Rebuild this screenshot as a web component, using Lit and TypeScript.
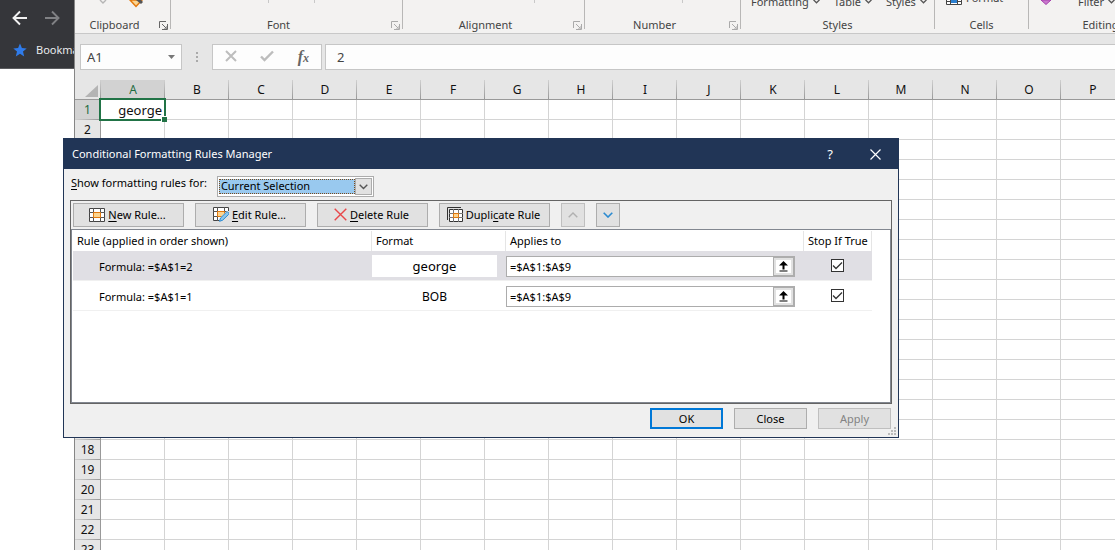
import { LitElement, html, css, svg, nothing } from "lit";
import { customElement, state } from "lit/decorators.js";

const COLUMNS = "ABCDEFGHIJKLMNOP".split("");
const ROWS = Array.from({ length: 23 }, (_, i) => i + 1);

interface Rule {
  formula: string;
  preview: string;
  large: boolean;
  range: string;
  stop: boolean;
}

const chevron = html`<svg class="chev" viewBox="0 0 7 5" width="7" height="5" aria-hidden="true">
  <path d="M0.5 0.8 3.5 3.8 6.5 0.8" fill="none" stroke="#555" stroke-width="1.3" />
</svg>`;

const newIcon = html`<svg viewBox="0 0 16 14" width="16" height="14" aria-hidden="true">
  <path d="M.5 .5h15v13h-15z" fill="#fff" stroke="#444" />
  <path d="M0 4.5h16M0 9.5h16M4.5 0v14M11.5 0v14" stroke="#555" fill="none" />
  <path d="M4.5 4.5h7v5h-7z" fill="#fbd591" stroke="#e3780c" />
</svg>`;

const editIcon = html`<svg viewBox="0 0 16 15" width="16" height="15" aria-hidden="true">
  <path d="M.5 .5h15v13h-15z" fill="#fff" stroke="#444" />
  <path d="M0 4.5h16M0 9.5h16M4.5 0v14M11.5 0v14" stroke="#555" fill="none" />
  <path d="M4.5 4.5h7v5h-7z" fill="#fbd591" stroke="#e3780c" />
  <path d="M16 4v11H6l1-4 7-7z" fill="#e1e1e1" />
  <path d="M6.5 14.3l1-3.3 6-5.8q1.2-.6 2 .3t.2 1.8l-6 5.9z" fill="#8cc7ee" stroke="#2b8ad0" />
</svg>`;

const deleteIcon = html`<svg viewBox="0 0 13 13" width="13" height="13" aria-hidden="true">
  <path d="M.7 .7 12.3 12.3M12.3 .7.7 12.3" stroke="#e8474a" stroke-width="1.4" fill="none" />
</svg>`;

const duplicateIcon = html`<svg viewBox="0 0 16 15" width="16" height="15" aria-hidden="true">
  <path d="M.5 13V.5H14" stroke="#333" fill="none" />
  <path d="M2.5 2.5h13v12h-13z" fill="#fff" stroke="#333" />
  <path d="M2 6.5h14M2 10.5h14M6.5 2v13M11.5 2v13" stroke="#777" fill="none" />
  <path d="M6.5 6.5h5v4h-5z" fill="#fbd591" stroke="#e3780c" />
</svg>`;

@customElement("app-browser")
class AppBrowser extends LitElement {
  static styles = css`
    :host { display: block; height: 68px; background: #35363a; border-bottom: 1px solid #5b5c5f; overflow: hidden; }
    .nav { display: flex; gap: 16px; padding: 10px 0 0 12px; }
    .icon { display: block; flex: none; }
    .nav button { border: 0; padding: 0; background: none; }
    .bookmarks { display: flex; align-items: center; gap: 9px; padding: 16px 0 0 13px; }
    .bookmarks a { color: #e8eaed; text-decoration: none; font-size: 11px; line-height: 16px; white-space: nowrap; }
  `;
  render() {
    return html`
      <nav class="nav">
        <button aria-label="Back"><svg class="icon" width="16" height="16" viewBox="0 0 16 16"><path d="M15 8H2M8 1.5 1.5 8 8 14.5" fill="none" stroke="#f1f1f1" stroke-width="1.9"/></svg></button>
        <button aria-label="Forward"><svg class="icon" width="16" height="16" viewBox="0 0 16 16"><path d="M1 8h13M8 1.5 14.5 8 8 14.5" fill="none" stroke="#808184" stroke-width="1.9"/></svg></button>
      </nav>
      <div class="bookmarks">
        <svg class="icon" width="14" height="14" viewBox="0 0 14 14"><path d="M7 .4 8.9 5 13.7 5.4 10 8.6 11.2 13.4 7 10.8 2.8 13.4 4 8.6.3 5.4 5.1 5z" fill="#2f7bea"/></svg>
        <a href="#bookmarks">Bookmarks</a>
      </div>`;
  }
}

@customElement("app-ribbon")
class AppRibbon extends LitElement {
  static styles = css`
    :host { display: flex; height: 33px; background: #f3f2f1; border-bottom: 1px solid #c8c8c8; overflow: hidden; color: #444; font-size: 11px; }
    .group { flex: none; box-sizing: border-box; height: 29px; display: flex; flex-direction: column; border-right: 1px solid #b8b7b6; }
    .clipboard { width: 96px; }
    .font { width: 232px; }
    .alignment { width: 182px; }
    .number { width: 156px; }
    .styles { width: 194px; }
    .cells { width: 94px; }
    .editing { width: 144px; }
    .tools { flex: none; height: 10px; display: flex; align-items: flex-end; box-sizing: border-box; }
    .tools.clip { padding-left: 23px; gap: 19px; align-items: flex-start; }
    .tools.fnt { padding-left: 97px; gap: 45px; align-items: flex-start; }
    .tools.aln { padding-left: 131px; align-items: flex-start; }
    .tools.num { padding-left: 97px; align-items: flex-start; }
    .tools.sty { padding-left: 10px; gap: 14px; }
    .tools.cel { padding-left: 11px; gap: 4px; align-items: flex-start; }
    .tools.edt { padding-left: 11px; gap: 26px; align-items: flex-start; }
    .tools button { border: 0; padding: 0; background: none; font: inherit; line-height: 16px; color: #444; display: flex; align-items: center; gap: 4px; }
    .tools.cel button { margin-top: -10px; }
    .tools.edt button { margin-top: -6px; }
    .chev { margin-bottom: 2px; }
    .tick { width: 1px; height: 3px; background: #c8c8c8; }
    .caption { display: flex; flex: none; align-items: center; gap: 5px; height: 14px; margin-top: 8px; padding-right: 2px; }
    .styles .caption, .cells .caption, .editing .caption { padding: 0; }
    .name { flex: 1; text-align: center; line-height: 14px; }
    .launch { border: 0; padding: 0; background: none; height: 9px; width: 9px; color: #aaa; }
    .launch.on { color: #666; }
    .launch svg { display: block; }
  `;
  launcher(on = false) {
    return html`<button class="launch ${on ? "on" : ""}" aria-label="More options"><svg width="9" height="9" viewBox="0 0 9 9"><path d="M.5 7V.5H7M3 3l4 4M8.5 3v5.5H3M8 5v3H5" fill="none" stroke="currentColor"/></svg></button>`;
  }
  group(cls: string, name: string, tools: unknown, launch: unknown = nothing) {
    return html`<section class="group ${cls}">${tools}<div class="caption"><span class="name">${name}</span>${launch}</div></section>`;
  }
  render() {
    return html`
      ${this.group("clipboard", "Clipboard", html`<div class="tools clip">
        <svg width="12" height="4" viewBox="0 0 12 4"><path d="M2 0 5 3 8 0" fill="none" stroke="#b5b5b5" stroke-width="1.4"/></svg>
        <svg width="16" height="8" viewBox="0 0 16 8"><path d="M1 0 7 6.5 13 0z" fill="#fbd591" stroke="#e3780c" stroke-width="1.5"/><path d="M7 0l5 4 2-2-2-2z" fill="#555"/></svg></div>`, this.launcher(true))}
      ${this.group("font", "Font", html`<div class="tools fnt"><i class="tick"></i><i class="tick"></i></div>`, this.launcher())}
      ${this.group("alignment", "Alignment", html`<div class="tools aln"><i class="tick"></i></div>`, this.launcher())}
      ${this.group("number", "Number", html`<div class="tools num"><i class="tick"></i></div>`, this.launcher())}
      ${this.group("styles", "Styles", html`<div class="tools sty"><button>Formatting${chevron}</button><button>Table${chevron}</button><button>Styles${chevron}</button></div>`)}
      ${this.group("cells", "Cells", html`<div class="tools cel"><svg width="16" height="5" viewBox="0 0 16 5"><path d="M.5 0v4.500h15V0M4.500 0v4M11.500 0v4M0 1.500h16" fill="#fff" stroke="#444"/><path d="M5 0h6v3H5z" fill="#2a7fd0"/></svg><button>Format</button></div>`)}
      ${this.group("editing", "Editing", html`<div class="tools edt"><svg width="12" height="5" viewBox="0 0 12 5"><path d="M1 0 6 4.500 11 0z" fill="#c879cc" stroke="#a63fae"/></svg><button>Filter${chevron}</button></div>`)}
    `;
  }
}

@customElement("app-formula-bar")
class AppFormulaBar extends LitElement {
  static styles = css`
    :host { display: flex; background: #e6e6e6; padding: 10px 0 10px 5px; color: #444; }
    .box { box-sizing: border-box; height: 26px; border: 1px solid #c6c6c6; background: #fdfdfd; display: flex; align-items: center; }
    .namebox { width: 102px; padding-right: 6px; }
    input { font: inherit; font-size: 13px; color: #444; border: 0; padding: 0; background: none; outline: none; min-width: 0; flex: 1; }
    .namebox input { padding-left: 6px; }
    .dots { width: 30px; display: grid; place-items: center; }
    .actions { width: 110px; justify-content: space-between; padding: 0 12px; margin-right: 3px; }
    .actions button { border: 0; padding: 0; background: none; height: 16px; }
    .fx { font-family: "Liberation Serif", serif; font-style: italic; font-weight: bold; font-size: 16px; line-height: 16px; color: #666; }
    .fx sub { font-size: 12px; line-height: 8px; vertical-align: baseline; }
    .formula { flex: 1; border-right: 0; padding-left: 11px; }
  `;
  render() {
    return html`
      <div class="box namebox"><input aria-label="Name box" value="A1" />
        <svg width="7" height="4" viewBox="0 0 7 4"><path d="M0 0h7L3.500 4z" fill="#777"/></svg></div>
      <div class="dots"><svg width="2" height="10" viewBox="0 0 2 10"><path d="M0 0h2v2H0zM0 4h2v2H0zM0 8h2v2H0z" fill="#aaa"/></svg></div>
      <div class="box actions">
        <button aria-label="Cancel"><svg width="12" height="12" viewBox="0 0 12 12"><path d="M1 1l10 10M11 1 1 11" stroke="#bdbdbd" stroke-width="2"/></svg></button>
        <button aria-label="Enter"><svg width="14" height="12" viewBox="0 0 14 12"><path d="M1 6.500 4.500 10 13 1.500" fill="none" stroke="#bdbdbd" stroke-width="2.400"/></svg></button>
        <button class="fx" aria-label="Insert function">f<sub>x</sub></button>
      </div>
      <div class="box formula"><input aria-label="Formula" value="2" /></div>`;
  }
}

@customElement("app-sheet")
class AppSheet extends LitElement {
  static styles = css`
    :host { display: block; overflow: hidden; background: #fff; }
    table { table-layout: fixed; border-collapse: separate; border-spacing: 0; width: 1050px; }
    .corner-col { width: 26px; }
    th, td { box-sizing: border-box; height: 20px; padding: 0; font-size: 12px; line-height: 18px; font-weight: normal; color: #111; }
    td { border-right: 1px solid #d4d4d4; border-bottom: 1px solid #d4d4d4; text-align: right; font-size: 13px; }
    thead th { border-bottom: 1px solid #999; background: linear-gradient(#d0d0d0, #999) right / 1px 100% no-repeat #e6e6e6; }
    tbody th { border-right: 1px solid #999; background: linear-gradient(90deg, #d0d0d0, #999) bottom / 100% 1px no-repeat #e6e6e6; }
    thead th.on { background-color: #d2d2d2; color: #1e6c41; border-bottom-color: #217346; }
    tbody th.on { background-color: #d2d2d2; color: #1e6c41; border-right-color: #217346; }
    .corner svg { display: block; margin: 3px 0 0 10px; }
    .active { position: relative; padding-right: 2px; }
    .active::before { content: ""; position: absolute; inset: -2px -2px -2px -2px; border: 2px solid #217346; }
    .active::after { content: ""; position: absolute; right: -3px; bottom: -3px; width: 5px; height: 5px; background: #217346; border: 1px solid #fff; border-width: 1px 0 0 1px; }
  `;
  render() {
    return html`<table>
      <colgroup><col class="corner-col" />${COLUMNS.map(() => html`<col />`)}</colgroup>
      <thead><tr><th class="corner"><svg width="13" height="12" viewBox="0 0 13 12"><path d="M13 0v12H0z" fill="#b4b4b4"/></svg></th>
        ${COLUMNS.map((c, i) => html`<th scope="col" class=${i === 0 ? "on" : ""}>${c}</th>`)}</tr></thead>
      <tbody>${ROWS.map((r) => html`<tr><th scope="row" class=${r === 1 ? "on" : ""}>${r}</th>
        ${COLUMNS.map((_, i) => (r === 1 && i === 0 ? html`<td class="active">george</td>` : html`<td></td>`))}</tr>`)}</tbody>
    </table>`;
  }
}

@customElement("app-rules-dialog")
class AppRulesDialog extends LitElement {
  @state() rules: Rule[] = [
    { formula: "Formula: =$A$1=2", preview: "george", large: true, range: "=$A$1:$A$9", stop: true },
    { formula: "Formula: =$A$1=1", preview: "BOB", large: false, range: "=$A$1:$A$9", stop: true },
  ];
  @state() selected = 0;

  static styles = css`
    :host { display: block; box-sizing: border-box; border: 1px solid #213556; background: #f0f0f0; color: #000; font-size: 11px; }
    button, select, input { font: inherit; color: inherit; border-radius: 0; }
    u { text-underline-offset: 2px; }
    .title { display: flex; align-items: center; height: 30px; background: #213556; color: #fff; padding: 0 16px 0 8px; }
    h1 { flex: 1; margin: 0; font-size: 11px; font-weight: normal; line-height: 16px; }
    .title button { border: 0; padding: 0; background: none; width: 14px; height: 16px; line-height: 16px; margin-left: 31px; font-size: 13px; }
    .title svg { display: block; margin: auto; }
    .scope { display: flex; align-items: flex-start; gap: 10px; padding: 7px 7px 3px; }
    .scope label { line-height: 14px; }
    .combo { display: flex; box-sizing: border-box; width: 157px; height: 21px; border: 1px solid #acacac; background: #fff; padding: 1px; }
    .combo select { flex: 1; min-width: 0; appearance: none; border: 1px dotted #7a4a1c; background: #99c9ef; padding: 0 0 1px 1px; margin: 1px 0; line-height: 12px; outline: none; }
    .arrow { box-sizing: border-box; width: 17px; display: grid; place-items: center; border: 1px solid #acacac; background: #e1e1e1; }
    .panel { margin: 0 6px; border: 1px solid #646464; }
    .toolbar { display: flex; gap: 11px; padding: 2px 2px 2px; }
    .btn { box-sizing: border-box; border: 1px solid #adadad; background: #e1e1e1; padding: 0; display: flex; align-items: center; justify-content: center; gap: 3px; }
    .toolbar .btn { width: 111px; height: 24px; padding: 0 2px 1px 0; }
    .toolbar .small { width: 24px; padding: 0; }
    .list { border: 1px solid #828790; background: #fff; height: 171px; padding: 1px 18px 0 1px; }
    table { width: 100%; table-layout: fixed; border-collapse: separate; border-spacing: 0; }
    .c2 { width: 134px; }
    .c3 { width: 298px; }
    .c4 { width: 68px; }
    th { height: 20px; padding: 0 4px; text-align: left; font-weight: normal; border-right: 1px solid #e5e5e5; line-height: 16px; white-space: nowrap; box-sizing: border-box; }
    td { box-sizing: border-box; height: 30px; padding: 0; border-bottom: 1px solid #f0f0f0; }
    .sel td { background: #e0dfe4; }
    .formula { padding-left: 26px; padding-top: 2px; }
    .preview { box-sizing: border-box; width: 125px; height: 22px; line-height: 22px; background: #fff; text-align: center; font-size: 12px; padding-top: 1px; }
    .large { font-size: 13px; padding-top: 0; }
    .ref { display: flex; width: 289px; height: 21px; margin-top: 1px; }
    .ref input { box-sizing: border-box; flex: 1; min-width: 0; border: 1px solid #acacac; border-right: 0; background: #fff; padding: 0 3px; outline: none; }
    .ref button { box-sizing: border-box; width: 22px; border: 2px solid #adadad; border-left-width: 1px; background: #fff; box-shadow: inset 0 0 0 2px #e1e1e1; padding: 0; display: grid; place-items: center; }
    .stop { padding-right: 2px; }
    .check { display: block; appearance: none; box-sizing: border-box; width: 13px; height: 13px; margin: 0 auto; border: 1px solid #333; background: #fff; }
    .check:checked { background: #fff url("data:image/svg+xml,%3Csvg xmlns='http://www.w3.org/2000/svg' viewBox='0 0 11 11'%3E%3Cpath d='M1 5.500 4 8.500 10 2.500' fill='none' stroke='%23333' stroke-width='1.300'/%3E%3C/svg%3E") center / 11px 11px no-repeat; }
    .footer { display: flex; justify-content: flex-end; gap: 11px; padding: 4px 7px 8px; }
    .footer .btn { width: 73px; height: 21px; }
    .footer .default { border: 2px solid #0078d7; }
    .btn:disabled { color: #838383; border-color: #bfbfbf; background: #e1e1e1; }
    .grip { position: absolute; right: 2px; bottom: 2px; }
  `;
  toggle(index: number) {
    this.rules = this.rules.map((r, i) => (i === index ? { ...r, stop: !r.stop } : r));
  }
  render() {
    return html`
      <header class="title"><h1>Conditional Formatting Rules Manager</h1>
        <button aria-label="Help">?</button>
        <button aria-label="Close window"><svg width="11" height="11" viewBox="0 0 11 11"><path d="M.5.5l10 10M10.500.5l-10 10" stroke="#fff" stroke-width="1.200"/></svg></button></header>
      <div class="scope"><label for="scope"><u>S</u>how formatting rules for:</label>
        <div class="combo"><select id="scope"><option>Current Selection</option><option>This Worksheet</option></select>
          <span class="arrow"><svg width="9" height="6" viewBox="0 0 9 6"><path d="M.7.7 4.500 4.500 8.300.7" fill="none" stroke="#555" stroke-width="1.400"/></svg></span></div></div>
      <div class="panel">
        <div class="toolbar">
          <button class="btn">${newIcon}<span><u>N</u>ew Rule...</span></button>
          <button class="btn">${editIcon}<span><u>E</u>dit Rule...</span></button>
          <button class="btn">${deleteIcon}<span><u>D</u>elete Rule</span></button>
          <button class="btn">${duplicateIcon}<span>Dupli<u>c</u>ate Rule</span></button>
          <button class="btn small" aria-label="Move up" disabled><svg width="10" height="6" viewBox="0 0 10 6"><path d="M.7 5.300 5 1 9.300 5.300" fill="none" stroke="#b0b0b0" stroke-width="1.400"/></svg></button>
          <button class="btn small" aria-label="Move down"><svg width="10" height="6" viewBox="0 0 10 6"><path d="M.7.7 5 5 9.300.7" fill="none" stroke="#2b8ad0" stroke-width="1.600"/></svg></button>
        </div>
        <div class="list"><table>
          <colgroup><col /><col class="c2" /><col class="c3" /><col class="c4" /></colgroup>
          <thead><tr><th scope="col">Rule (applied in order shown)</th><th scope="col">Format</th><th scope="col">Applies to</th><th scope="col">Stop If True</th></tr></thead>
          <tbody>${this.rules.map((r, i) => html`<tr class=${i === this.selected ? "sel" : ""} @click=${() => (this.selected = i)}>
            <td class="formula">${r.formula}</td>
            <td><div class="preview ${r.large ? "large" : ""}">${r.preview}</div></td>
            <td><div class="ref"><input aria-label="Applies to" .value=${r.range} />
              <button aria-label="Collapse dialog"><svg width="9" height="11" viewBox="0 0 9 11"><path d="M4.500 0 9 4.500H5.500V8.500h-2V4.500H0zM.5 9.500h8v1h-8z" fill="#000"/></svg></button></div></td>
            <td class="stop"><input class="check" type="checkbox" aria-label="Stop if true" .checked=${r.stop} @change=${() => this.toggle(i)} /></td></tr>`)}</tbody>
        </table></div>
      </div>
      <footer class="footer"><button class="btn default">OK</button><button class="btn">Close</button><button class="btn" disabled>Apply</button></footer>
      <svg class="grip" width="8" height="8" viewBox="0 0 8 8"><path d="M6 0h2v2H6zM3 3h2v2H3zM6 3h2v2H6zM0 6h2v2H0zM3 6h2v2H3zM6 6h2v2H6z" fill="#bbb"/></svg>`;
  }
}

@customElement("app-root")
class AppRoot extends LitElement {
  static styles = css`
    :host { display: grid; grid-template-columns: 74px minmax(0, 1fr); position: relative; height: 100vh; overflow: hidden; background: #fff; font-family: "Noto Sans", "Open Sans", sans-serif; }
    .excel { border-left: 1px solid #868686; overflow: hidden; }
    .dialog { position: absolute; left: 63px; right: 216px; top: 138px; }
  `;
  render() {
    return html`
      <div class="browser"><app-browser></app-browser></div>
      <main class="excel"><app-ribbon></app-ribbon><app-formula-bar></app-formula-bar><app-sheet></app-sheet></main>
      <app-rules-dialog class="dialog" role="dialog" aria-label="Conditional Formatting Rules Manager"></app-rules-dialog>`;
  }
}
